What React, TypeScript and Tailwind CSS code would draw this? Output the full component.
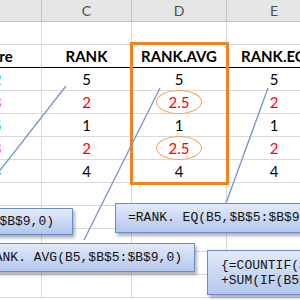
import React from "react";

const cellFont = { fontFamily: "Lato, 'Open Sans', sans-serif" };
const mono = { fontFamily: "'Liberation Mono', 'DejaVu Sans Mono', monospace" };

type V = { t: string; c?: string; o?: boolean };

const rows: V[][] = [
  [{ t: "92", c: "text-[#33c4ee]" }, { t: "5" }, { t: "5" }, { t: "5" }],
  [{ t: "78", c: "text-[#ff5fd0]" }, { t: "2", c: "text-[#ff0000]" }, { t: "2.5", c: "text-[#ff0000]", o: true }, { t: "2", c: "text-[#ff0000]" }],
  [{ t: "95", c: "text-[#33c4ee]" }, { t: "1" }, { t: "1" }, { t: "1" }],
  [{ t: "78", c: "text-[#ff5fd0]" }, { t: "2", c: "text-[#ff0000]" }, { t: "2.5", c: "text-[#ff0000]", o: true }, { t: "2", c: "text-[#ff0000]" }],
  [{ t: "84", c: "text-[#33c4ee]" }, { t: "4" }, { t: "4" }, { t: "4" }],
];

const cols = ["B", "C", "D", "E"];

function Cell({ children, className = "" }: { children?: React.ReactNode; className?: string }) {
  return (
    <div className={`h-[23px] border-r border-b border-[#d9d9d9] flex items-center justify-center ${className}`}>
      {children}
    </div>
  );
}

export default function App() {
  return (
    <div className="relative w-[300px] h-[300px] overflow-hidden bg-white" style={cellFont}>
      <div className="ml-[-53px] grid grid-cols-[95px_90px_95px_95px] w-[375px]">
        {cols.map((c) => (
          <div
            key={c}
            className="h-[22px] bg-[#e6e6e6] border-r border-b border-[#c4c4c4] flex items-center justify-center text-[14px] text-[#4d4d4d]"
          >
            {c}
          </div>
        ))}
        {cols.map((c) => (
          <Cell key={"e" + c} />
        ))}
        {["Score", "RANK", "RANK.AVG", "RANK.EQ"].map((h) => (
          <div
            key={h}
            className="h-[23px] border-r border-[#d9d9d9] border-b border-b-black flex items-center justify-center text-[15px] font-bold text-black"
          >
            {h}
          </div>
        ))}
        {rows.map((r, i) =>
          r.map((v, j) => (
            <Cell key={i + "-" + j} className={`text-[15px] ${v.c ?? "text-black"} ${j === 0 ? "pr-[2px]" : ""}`}>
              {v.o ? (
                <span className="inline-flex items-center justify-center w-[46px] h-[24px] rounded-[50%] border border-[#f5a05c]">
                  {v.t}
                </span>
              ) : (
                v.t
              )}
            </Cell>
          ))
        )}
        {[0, 1, 2, 3, 4].map((i) =>
          cols.map((c) => <Cell key={"x" + i + c} />)
        )}
      </div>

      {/* highlight box around RANK.AVG column */}
      <div className="absolute left-[130px] top-[42px] w-[99px] h-[143px] border-[3px] border-[#f58220]" />

      {/* pointer lines */}
      <svg className="absolute left-0 top-0" width="300" height="300">
        <g stroke="#7a98cf" strokeWidth="1.4" fill="none">
          <line x1="-31" y1="210" x2="66" y2="86" />
          <line x1="84" y1="240" x2="160" y2="88" />
          <line x1="225" y1="206" x2="268" y2="88" />
        </g>
      </svg>

      {/* callouts */}
      <div
        className="absolute left-[-130px] top-[208px] w-[203px] h-[27px] flex items-center justify-end pr-[18px] border border-[#6a8cca] bg-gradient-to-b from-[#e3eafa] to-[#b3c7ee] shadow-[2px_3px_3px_rgba(0,0,0,0.3)] text-[13px] text-[#111]"
        style={mono}
      >
        =RANK(B5,$B$5:$B$9,0)
      </div>
      <div
        className="absolute left-[115px] top-[203px] w-[230px] h-[30px] flex items-center pl-[12px] border border-[#6a8cca] bg-gradient-to-b from-[#e3eafa] to-[#b3c7ee] shadow-[2px_3px_3px_rgba(0,0,0,0.3)] text-[13px] text-[#111] whitespace-nowrap"
        style={mono}
      >
        =RANK. EQ(B5,$B$5:$B$9,0)
      </div>
      <div
        className="absolute left-[-32px] top-[243px] w-[227px] h-[29px] flex items-center justify-end pr-[12px] border border-[#6a8cca] bg-gradient-to-b from-[#e3eafa] to-[#b3c7ee] shadow-[2px_3px_3px_rgba(0,0,0,0.3)] text-[13px] text-[#111] whitespace-nowrap"
        style={mono}
      >
        =RANK. AVG(B5,$B$5:$B$9,0)
      </div>
      <div
        className="absolute left-[207px] top-[250px] w-[200px] h-[45px] flex flex-col justify-center pl-[13px] border border-[#6a8cca] bg-gradient-to-b from-[#e3eafa] to-[#b3c7ee] shadow-[2px_3px_3px_rgba(0,0,0,0.3)] text-[13px] leading-[15px] text-[#111] whitespace-nowrap"
        style={mono}
      >
        <div>{"{=COUNTIF($B$5:$B$9,\">\"&B5)"}</div>
        <div>+SUM(IF(B5=$B$5:$B$9,1))</div>
      </div>
    </div>
  );
}
